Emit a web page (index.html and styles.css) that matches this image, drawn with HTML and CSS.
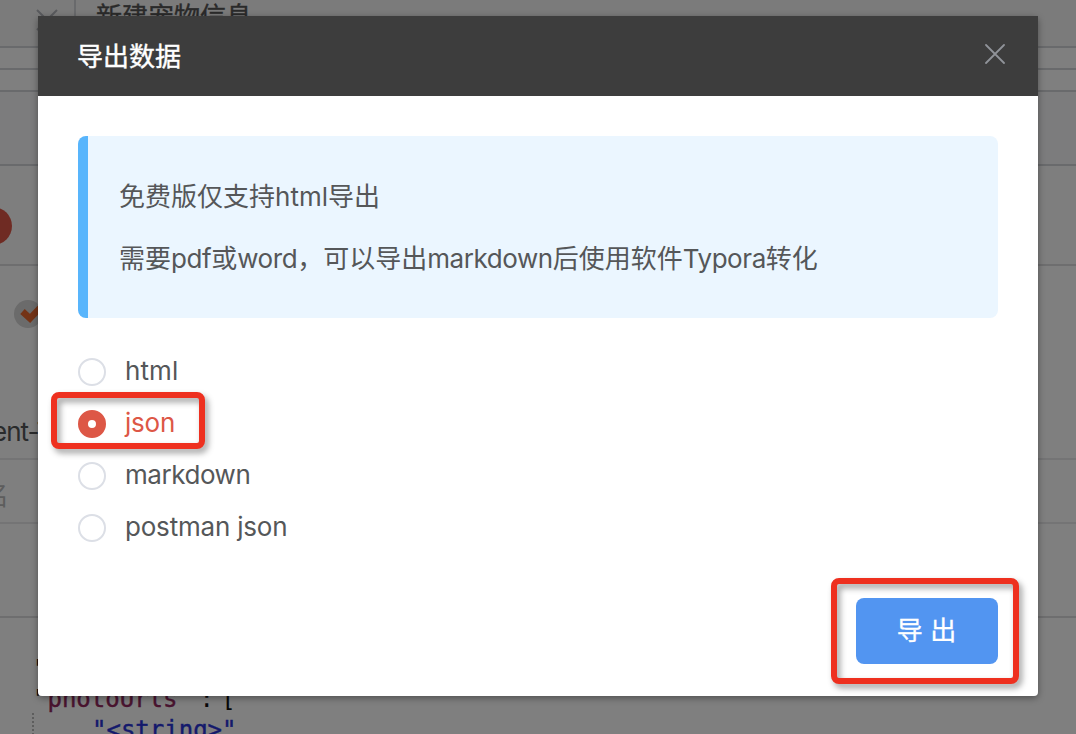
FILE: index.html
```html
<!DOCTYPE html>
<html lang="zh-CN">
<head>
<meta charset="utf-8">
<title>导出数据</title>
<link rel="stylesheet" href="styles.css">
</head>
<body>
<div class="page">
  <div class="row row-tabs">
    <div class="tab-prev">
      <svg class="tab-close" viewBox="0 0 22 22" width="22" height="22"><path d="M1 1 21 21M21 1 1 21" fill="none" stroke="#b4b6bd" stroke-width="2"/></svg>
    </div>
    <div class="tab-title">新建宠物信息</div>
  </div>
  <div class="row row-gap"></div>
  <div class="row row-gap"></div>
  <div class="row row-bar"></div>
  <div class="row row-method"><span class="dot"></span></div>
  <div class="row row-headers">
    <svg class="check" viewBox="0 0 28 28" width="28" height="28"><circle cx="14" cy="14" r="14" fill="#d6d6d6"/><path d="M8.500 11.500 16 18.500 26 8" fill="none" stroke="#e8662c" stroke-width="6.500"/></svg>
    <span class="header-name">ent-Type</span>
  </div>
  <div class="row row-name"><span>名</span></div>
  <div class="row row-empty"></div>
  <div class="code">
    <div class="code-line quote">"</div>
    <div class="code-line key-line"><span>"</span><span class="key">photoUrls</span><span class="punct">" : [</span></div>
    <div class="code-line nested"><span class="string">"&lt;string&gt;"</span></div>
  </div>
</div>

<div class="overlay">
  <section class="dialog">
    <header class="dialog-header">
      <h1 class="dialog-title">导出数据</h1>
      <svg class="dialog-close" viewBox="0 0 20 20" width="20" height="20"><path d="M1 1 19 19M19 1 1 19" fill="none" stroke="#909399" stroke-width="1.800" stroke-linecap="round"/></svg>
    </header>
    <div class="dialog-body">
      <div class="notice">
        <p>免费版仅支持<span class="latin-wide">html</span>导出</p>
        <p>需要<span class="latin">pdf</span>或<span class="latin">word</span>，可以导出<span class="latin">markdown</span>后使用软件<span class="latin">Typora</span>转化</p>
      </div>
      <div class="options">
        <label class="option"><span class="radio"></span><span class="label label-wide">html</span></label>
        <label class="option selected"><span class="radio"></span><span class="label">json</span><span class="mark mark-option"></span></label>
        <label class="option"><span class="radio"></span><span class="label label-tight">markdown</span></label>
        <label class="option"><span class="radio"></span><span class="label">postman json</span></label>
      </div>
      <footer class="dialog-footer">
        <div class="action"><button class="export">导 出</button><span class="mark mark-action"></span></div>
      </footer>
    </div>
  </section>
</div>
</body>
</html>
```
FILE: styles.css
```css
* { box-sizing: border-box; }
body {
  margin: 0;
  width: 1076px;
  height: 734px;
  overflow: hidden;
  font-family: Inter, "Noto Sans CJK SC", sans-serif;
  font-size: 26px;
  color: #555759;
}
.page {
  height: 734px;
  overflow: hidden;
  background: #fff;
}
.row {
  border-bottom: 2px solid #dcdddf;
  overflow: hidden;
}
.row-tabs {
  display: flex;
  height: 48px;
  background: #f7f7f7;
  border-color: #d2d4d8;
}
.tab-prev {
  display: flex;
  justify-content: flex-end;
  width: 76px;
  padding: 9px 16px 0 0;
  border-right: 2px solid #d2d4d8;
}
.tab-title {
  padding-left: 20px;
  line-height: 34px;
  color: #555;
  -webkit-text-stroke: 0.4px #555;
}
.row-gap { height: 22px; border-color: #d2d4d8; }
.row-bar { height: 74px; background: #f9f9fa; border-color: #d2d4d8; }
.row-method { height: 100px; padding-top: 41px; background: #fcfcfc; }
.dot {
  display: block;
  width: 38px;
  height: 38px;
  margin-left: -26px;
  border-radius: 50%;
  background: #df5646;
}
.row-headers {
  height: 194px;
  padding-top: 34px;
  border-color: #e9e9ea;
}
.check { display: block; margin-left: 14px; }
.header-name {
  display: block;
  margin: 88px 0 0 -8px;
  line-height: 32px;
  letter-spacing: -1px;
}
.row-name {
  height: 64px;
  border-color: #e9e9ea;
  line-height: 72px;
  color: #bbb;
}
.row-name span { display: block; margin-left: -17px; }
.row-empty { height: 94px; }
.code {
  padding: 35px 0 0 32px;
  font-family: "DejaVu Sans Mono", monospace;
  font-size: 24px;
  color: #111;
}
.code-line { height: 30px; line-height: 32px; white-space: pre; }
.key { color: #92295f; -webkit-text-stroke: 0.4px #92295f; }
.punct { letter-spacing: -3.5px; }
.quote { padding-left: 1px; }
.key-line { padding-left: 1px; }
.nested {
  padding-left: 58px;
  border-left: 2px dotted #bbb;
  line-height: 34px;
}
.string { color: #2833d8; -webkit-text-stroke: 0.4px #2833d8; }

.overlay {
  position: absolute;
  inset: 0;
  display: flex;
  justify-content: center;
  align-items: flex-start;
  padding-top: 16px;
  background: rgba(0, 0, 0, 0.5);
}
.dialog {
  width: 1000px;
  height: 680px;
  border-radius: 4px;
  background: #fff;
  box-shadow: 0 2px 7px rgba(0, 0, 0, 0.38);
}
.dialog-header {
  display: flex;
  justify-content: space-between;
  height: 80px;
  padding: 0 33px 0 39px;
  background: #3d3d3d;
}
.dialog-title {
  margin: 0;
  font-size: 26px;
  font-weight: 400;
  line-height: 82px;
  color: #fff;
  -webkit-text-stroke: 0.4px #fff;
}
.dialog-close { margin-top: 28px; }
.dialog-body { padding: 40px; }
.notice {
  height: 182px;
  padding: 30px 31px 0;
  border-left: 10px solid #58b5fc;
  border-radius: 8px;
  background: #ebf6ff;
}
.notice p { margin: 0; line-height: 62px; white-space: nowrap; }
.latin { letter-spacing: -0.43px; }
.latin-wide { letter-spacing: 0; }
.options { padding-top: 28px; }
.option {
  position: relative;
  display: flex;
  align-items: center;
  gap: 19px;
  height: 52px;
}
.label { padding-bottom: 3px; letter-spacing: -0.2px; }
.label-wide { letter-spacing: 0.1px; }
.label-tight { letter-spacing: -0.45px; }
.radio {
  width: 28px;
  height: 28px;
  border: 2px solid #dcdfe6;
  border-radius: 50%;
}
.selected { color: #dd5746; }
.selected .radio { border: 10px solid #dd5746; }
.mark {
  position: absolute;
  border: 6px solid #ee301f;
  border-radius: 8px;
  filter: drop-shadow(3px 4px 3px rgba(0, 0, 0, 0.38));
}
.mark-option { left: -27px; top: -6px; width: 154px; height: 57px; }
.dialog-footer {
  display: flex;
  justify-content: flex-end;
  padding-top: 44px;
}
.action { position: relative; }
.mark-action { left: -25px; top: -20px; width: 188px; height: 106px; }
.export {
  display: block;
  width: 142px;
  height: 66px;
  padding: 0 1px 0 0;
  border: 0;
  border-radius: 8px;
  background: #5295f1;
  color: #fff;
  font: 400 26px/66px Inter, "Noto Sans CJK SC", sans-serif;
  -webkit-text-stroke: 0.3px #fff;
}
```
